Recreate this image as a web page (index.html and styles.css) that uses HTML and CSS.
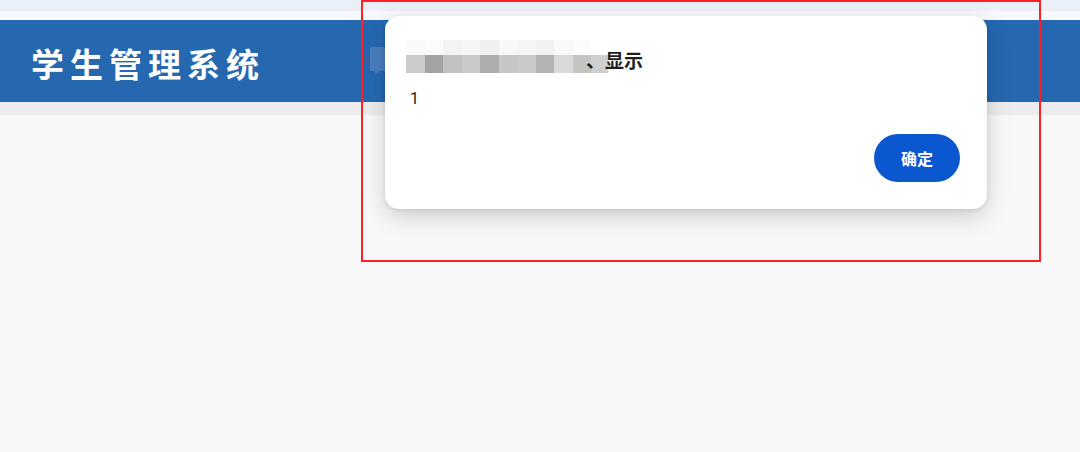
FILE: index.html
```html
<!DOCTYPE html>
<html lang="zh-CN">
<head>
<meta charset="utf-8">
<title>学生管理系统</title>
<link rel="stylesheet" href="styles.css">
</head>
<body>
<div class="page">
  <div class="topstrip"></div>
  <div class="topgap"></div>
  <header class="header">
    <h1 class="title">学生管理系统</h1>
  </header>
  <div class="subbar"></div>
  <main class="main"></main>
</div>

<svg class="tab" width="28" height="30" viewBox="0 0 28 30" aria-hidden="true">
  <polygon points="1,16 10,9 10,23" fill="#3c5f9f"/>
  <rect x="9" y="2" width="19" height="24" fill="#4a7ebf"/>
  <polygon points="13,26 18,26 15,29" fill="#4a7ebf"/>
</svg>

<div class="dialog" role="dialog">
  <div class="dlg-title">
    <div class="mosaic">
      <span></span><span></span><span></span><span></span><span></span><span></span><span></span><span></span><span></span><span></span><span></span>
      <span></span><span></span><span></span><span></span><span></span><span></span><span></span><span></span><span></span><span></span><span></span>
    </div>
    <span class="dlg-title-text">、显示</span>
  </div>
  <div class="dlg-body">1</div>
  <div class="dlg-actions">
    <button class="btn-ok">确定</button>
  </div>
</div>

<div class="annot"></div>
</body>
</html>
```
FILE: styles.css
```css
html, body {
  margin: 0;
  padding: 0;
  height: 100%;
}
body {
  font-family: "Noto Sans", "Noto Sans CJK SC", sans-serif;
  background: #f8f8f8;
  overflow: hidden;
}
.page {
  display: flex;
  flex-direction: column;
  height: 452px;
}
.topstrip {
  height: 11px;
  background: #ebf0f8;
}
.topgap {
  height: 9px;
  background: #f8f9fc;
}
.header {
  height: 82px;
  background: #2568b0;
  display: flex;
  align-items: center;
  padding-left: 31px;
  box-sizing: border-box;
}
.title {
  margin: 0;
  color: #ffffff;
  font-family: "Noto Sans CJK SC", sans-serif;
  font-size: 33px;
  font-weight: 700;
  letter-spacing: 6px;
  line-height: 40px;
  padding-top: 4px;
}
.subbar {
  height: 13px;
  background: #ececec;
}
.main {
  flex: 1;
  background: #f8f8f8;
}

.tab {
  position: absolute;
  left: 361px;
  top: 45px;
}

.dialog {
  position: absolute;
  left: 385px;
  top: 16px;
  width: 602px;
  height: 193px;
  box-sizing: border-box;
  background: #ffffff;
  border-radius: 14px;
  box-shadow: 0 8px 24px rgba(0, 0, 0, 0.17), 0 1px 4px rgba(0, 0, 0, 0.10);
  padding: 24px 27px 27px 21px;
  display: flex;
  flex-direction: column;
}
.dlg-title {
  display: flex;
  align-items: flex-end;
  height: 33px;
}
.mosaic {
  display: grid;
  grid-template-columns: 19px 18px 19px 18px 19px 18px 19px 18px 19px 18px 17px;
  grid-template-rows: 15px 18px;
  flex: none;
}
.mosaic span:nth-child(1) { background: #f9f9f9; }
.mosaic span:nth-child(2) { background: #fbfbfb; }
.mosaic span:nth-child(3) { background: #f3f3f3; }
.mosaic span:nth-child(4) { background: #f6f6f6; }
.mosaic span:nth-child(5) { background: #efefef; }
.mosaic span:nth-child(6) { background: #f8f8f8; }
.mosaic span:nth-child(7) { background: #f6f6f6; }
.mosaic span:nth-child(8) { background: #f2f2f2; }
.mosaic span:nth-child(9) { background: #f9f9f9; }
.mosaic span:nth-child(10) { background: #fcfcfc; }
.mosaic span:nth-child(11) { background: #ffffff; }
.mosaic span:nth-child(12) { background: #cbcbcb; }
.mosaic span:nth-child(13) { background: #a3a3a3; }
.mosaic span:nth-child(14) { background: #c2c2c2; }
.mosaic span:nth-child(15) { background: #c9c9c9; }
.mosaic span:nth-child(16) { background: #adadad; }
.mosaic span:nth-child(17) { background: #c6c6c6; }
.mosaic span:nth-child(18) { background: #c9c9c9; }
.mosaic span:nth-child(19) { background: #b3b3b3; }
.mosaic span:nth-child(20) { background: #dadada; }
.mosaic span:nth-child(21) { background: #c4c4c4; }
.mosaic span:nth-child(22) { background: #d0d0d0; }

.dlg-title-text {
  position: relative;
  margin-left: -22px;
  font-family: "Noto Sans CJK SC", sans-serif;
  font-size: 19px;
  font-weight: 700;
  line-height: 26px;
  color: #1f1f1f;
}
.dlg-body {
  margin-top: 14px;
  padding-left: 4px;
  font-family: "Roboto", "Noto Sans CJK SC", sans-serif;
  font-size: 16px;
  line-height: 24px;
  color: #1f1f1f;
}
.dlg-actions {
  margin-top: auto;
  display: flex;
  justify-content: flex-end;
}
.btn-ok {
  width: 86px;
  height: 48px;
  border: none;
  border-radius: 24px;
  background: #0b57d0;
  color: #ffffff;
  font-family: "Noto Sans CJK SC", sans-serif;
  font-size: 16px;
  font-weight: 700;
  padding: 0;
}

.annot {
  position: absolute;
  left: 361px;
  top: 0;
  width: 680px;
  height: 262px;
  box-sizing: border-box;
  border: 2px solid #ff1f24;
  pointer-events: none;
}
```
